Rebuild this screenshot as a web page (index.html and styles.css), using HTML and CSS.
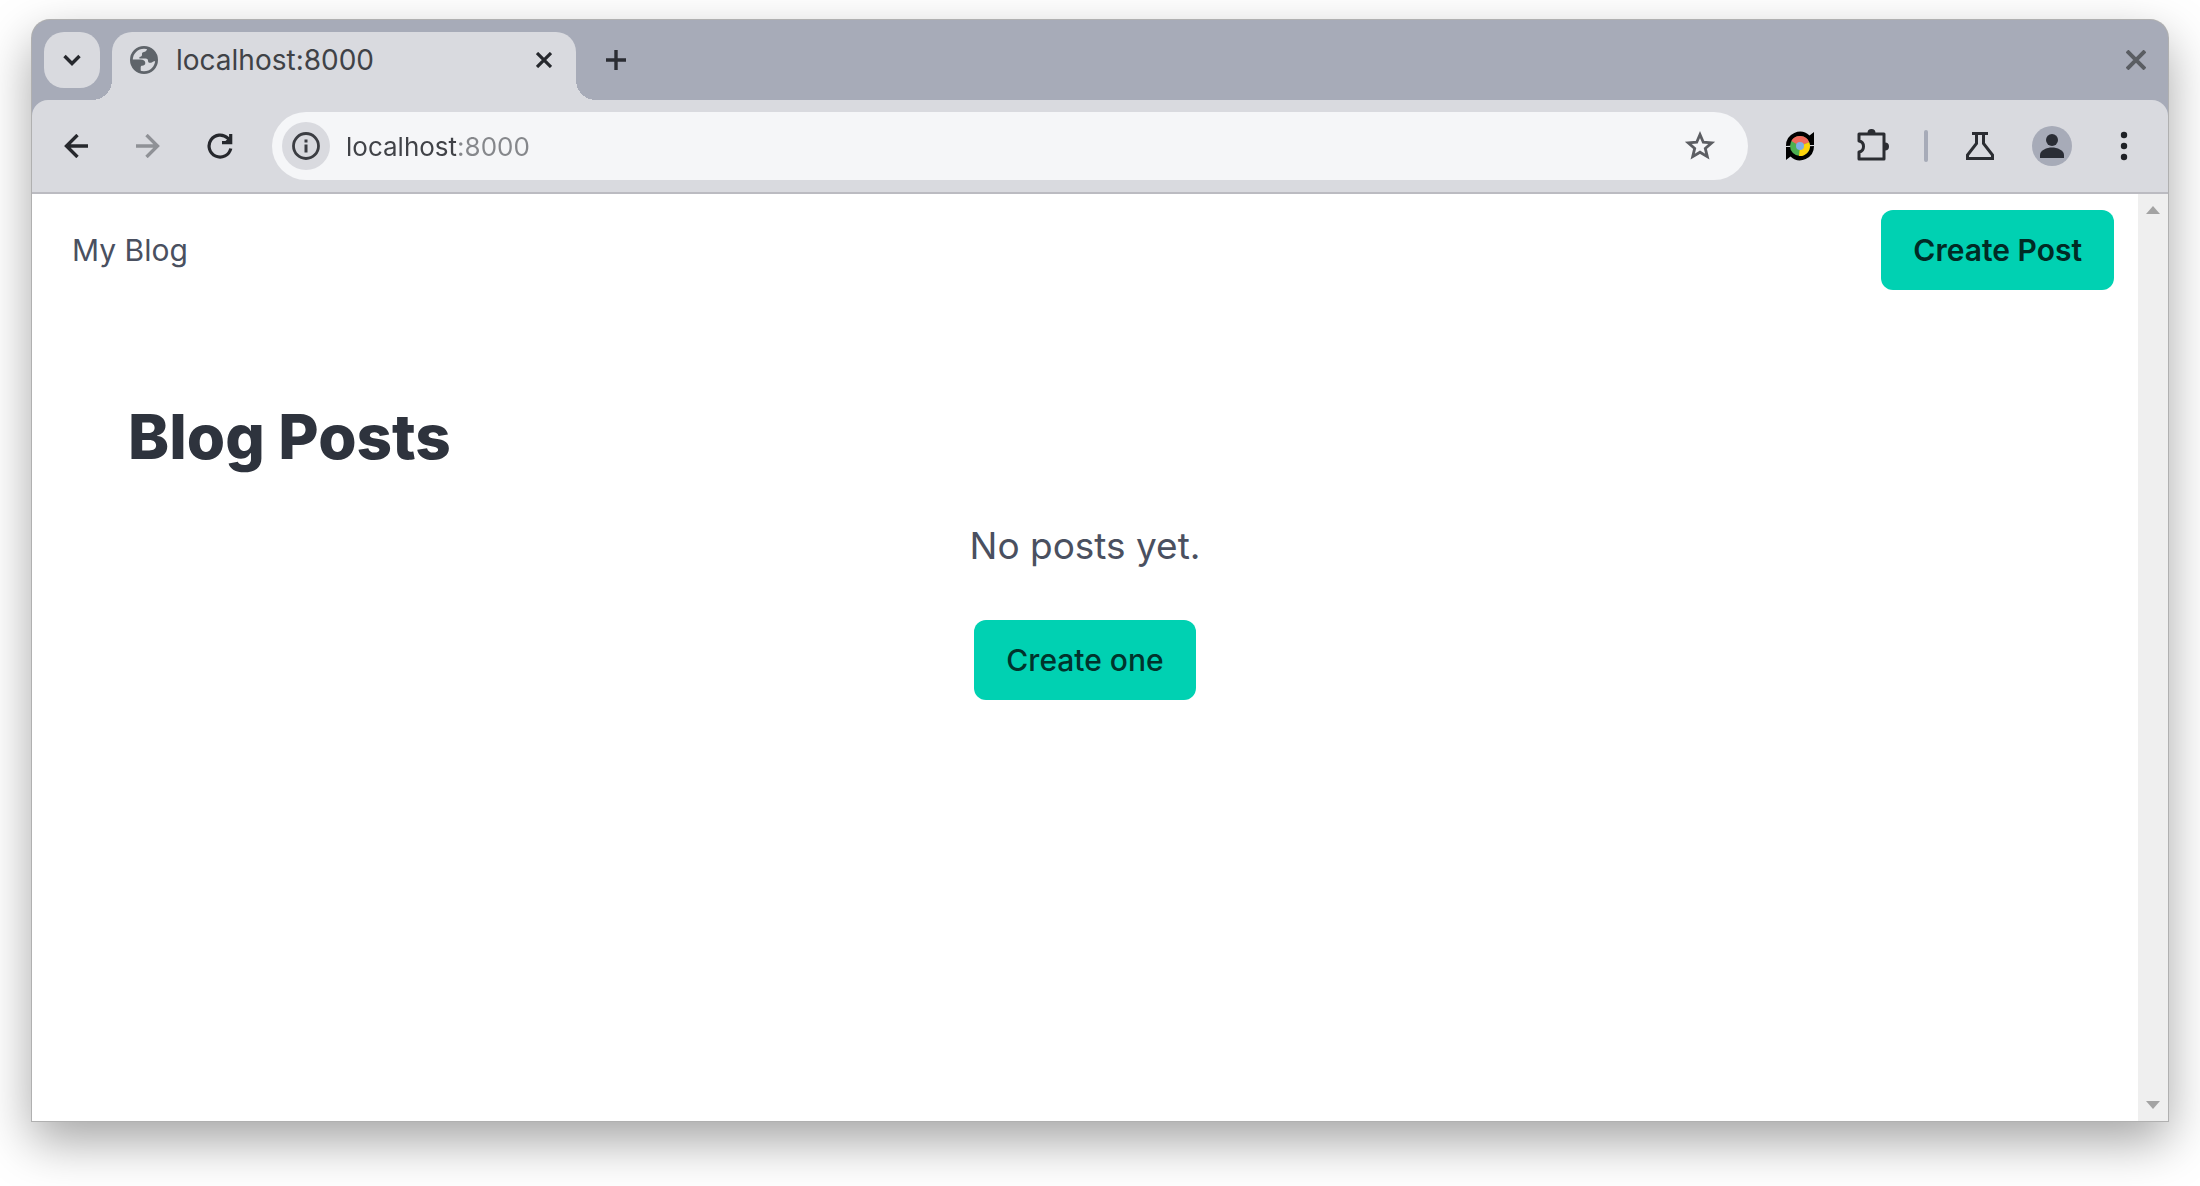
FILE: index.html
```html
<!DOCTYPE html>
<html lang="en">
<head>
    <meta charset="utf-8">
    <title>localhost:8000</title>
    <link rel="stylesheet" href="styles.css">
</head>
<body>
    <div class="window">
        <div class="tab-strip">
            <button class="tab-search" aria-label="Search tabs">
                <svg width="24" height="24" viewBox="0 0 24 24" fill="none" stroke="#26282d" stroke-width="3.4"><path d="M4.500 8 12 15.500 19.500 8"/></svg>
            </button>
            <div class="tab">
                <svg width="28" height="28" viewBox="0 0 28 28">
                    <circle cx="14" cy="14" r="12.600" fill="#d9dadf" stroke="#5f646a" stroke-width="2.800"/>
                    <path d="M17 2c.3 2-.8 3.600-3 4-1.500.3-2.200 1-2 2.400.2 1.500-1 2.300-2.600 2.500v1.600h6c2.300 0 2.600 1.200 2.700 2.700.1 1.200 1 1.800 2.600 1.600 2-.3 2.600-2.300 5.800-1.800A13 13 0 0 0 17 2z" fill="#5f646a"/>
                    <path d="M2 13.500h8.500c3 0 4.800 1.400 4.800 3.500 0 1.800-1.400 2.700-3.300 2.800-.9 0-1.300.6-1.300 1.600V26A13 13 0 0 1 2 13.500z" fill="#5f646a"/>
                </svg>
                <span class="tab-title">localhost:8000</span>
                <button class="tab-close" aria-label="Close tab">
                    <svg width="16" height="16" viewBox="0 0 16 16" fill="none" stroke="#26282d" stroke-width="3.200"><path d="M1 1l14 14M15 1 1 15"/></svg>
                </button>
            </div>
            <button class="new-tab" aria-label="New tab">
                <svg width="20" height="20" viewBox="0 0 20 20" fill="none" stroke="#2b2d33" stroke-width="3.400"><path d="M10 0v20M0 10h20"/></svg>
            </button>
            <button class="window-close" aria-label="Close window">
                <svg width="20" height="20" viewBox="0 0 20 20" fill="none" stroke="#5a5d62" stroke-width="4"><path d="M1 1l18 18M19 1 1 19"/></svg>
            </button>
        </div>

        <div class="toolbar">
            <button class="tool" aria-label="Back">
                <svg width="24" height="24" viewBox="0 0 24 24" fill="none" stroke="#26282d" stroke-width="3.400"><path d="M24 12H2M13.500 1 2.500 12l11 11"/></svg>
            </button>
            <button class="tool" aria-label="Forward" disabled>
                <svg width="24" height="24" viewBox="0 0 24 24" fill="none" stroke="#8f9196" stroke-width="3.400"><path d="M0 12h22M10.500 1l11 11-11 11"/></svg>
            </button>
            <button class="tool" aria-label="Reload">
                <svg width="26" height="26" viewBox="0 0 26 26" fill="none" stroke="#26282d" stroke-width="3.200"><path d="M23.800 15.500A11 11 0 1 1 20.800 5.200L23 7.500"/><path d="M23.700 1v8.700h-8.700"/><path d="M18 8.500 23 3.500v5z" fill="#26282d" stroke="none"/></svg>
            </button>
            <div class="address">
                <button class="site-info" aria-label="View site information">
                    <svg width="28" height="28" viewBox="0 0 28 28" fill="none" stroke="#3b3d42" stroke-width="2.800"><circle cx="14" cy="14" r="12.500"/><path d="M14 12.500v8M14 7.500v3" stroke-width="3"/></svg>
                </button>
                <input class="url" type="text" value="localhost:8000" aria-label="Address" spellcheck="false">
                <button class="bookmark" aria-label="Bookmark this page">
                    <svg width="32" height="32" viewBox="0 0 32 32" fill="none" stroke="#5c5e63" stroke-width="2.800"><path d="M16 4.500l3.300 7.700 8.400.7-6.400 5.500 2 8.200-7.300-4.400-7.300 4.400 2-8.200-6.400-5.500 8.400-.7z"/></svg>
                </button>
            </div>
            <button class="tool" aria-label="Chrome reload extension">
                <svg width="30" height="30" viewBox="0 0 30 30">
                    <path d="M1 15A14 14 0 0 1 24.500 4.500L29 1v13H19zM29 15A14 14 0 0 1 5.500 25.500L1 29V16h10z" fill="#000"/>
                    <circle cx="15" cy="15" r="10" fill="#4caf50"/>
                    <path d="M15 15 6.300 10A10 10 0 0 1 24.200 11.200z" fill="#f0695c"/>
                    <path d="M15 15l9.200-3.800A10 10 0 0 1 14 25z" fill="#fdd30a"/>
                    <circle cx="15" cy="15" r="4" fill="#7faee6"/>
                </svg>
            </button>
            <button class="tool" aria-label="Extensions">
                <svg width="34" height="34" viewBox="0 0 34 34" fill="none" stroke="#2b2d32" stroke-width="3" stroke-linejoin="round"><path d="M4 5h25v25H4v-7c6-1 6-10 0-11z"/><path d="M12.500 4a4 4 0 0 1 8 0zM30 13.500a4 4 0 0 1 0 8z" fill="#2b2d32" stroke="none"/></svg>
            </button>
            <span class="divider"></span>
            <button class="tool" aria-label="Labs">
                <svg width="28" height="28" viewBox="0 0 28 28" fill="none" stroke="#2b2d32" stroke-width="3"><path d="M6 1.500h16M10.500 2v9.500L1.500 23v3.500h25V23l-9-11.500V2"/></svg>
            </button>
            <button class="tool" aria-label="Profile">
                <svg width="40" height="40" viewBox="0 0 40 40"><circle cx="20" cy="20" r="20" fill="#a7abb8"/><circle cx="20" cy="14" r="6" fill="#2a2d35"/><path d="M8 32v-3c0-5 7-7.500 12-7.500S32 24 32 29v3z" fill="#2a2d35"/></svg>
            </button>
            <button class="tool" aria-label="Menu">
                <svg width="8" height="30" viewBox="0 0 8 30" fill="#1f2126"><circle cx="4" cy="4" r="3.200"/><circle cx="4" cy="15" r="3.200"/><circle cx="4" cy="26" r="3.200"/></svg>
            </button>
        </div>

        <div class="viewport">
            <div class="page">
                <nav class="navbar">
                    <a class="brand" href="#">My Blog</a>
                    <a class="button is-strong" href="#">Create Post</a>
                </nav>
                <main class="section">
                    <h1 class="title">Blog Posts</h1>
                    <div class="empty">
                        <p class="empty-text">No posts yet.</p>
                        <a class="button" href="#">Create one</a>
                    </div>
                </main>
            </div>
            <div class="scrollbar">
                <svg width="14" height="8" viewBox="0 0 14 8" fill="#a3a3a3"><path d="M7 0l7 8H0z"/></svg>
                <svg width="14" height="8" viewBox="0 0 14 8" fill="#a3a3a3"><path d="M0 0h14L7 8z"/></svg>
            </div>
        </div>
    </div>
</body>
</html>
```
FILE: styles.css
```css
* {
    box-sizing: border-box;
}
body {
    margin: 0;
    min-height: 100vh;
    display: flex;
    padding: 20px 32px 65px;
    background-color: #fff;
    font-family: Inter, "Liberation Sans", sans-serif;
    overflow: hidden;
}
button {
    display: flex;
    align-items: center;
    justify-content: center;
    flex: none;
    padding: 0;
    border: none;
    background: none;
    cursor: pointer;
}
svg {
    display: block;
    flex: none;
}
a {
    text-decoration: none;
}

/* window frame */
.window {
    flex: 1;
    display: flex;
    flex-direction: column;
    background-color: #a7abb8;
    border-radius: 18px 18px 0 0;
    box-shadow: 0 0 0 1px #b0b0b0, 0 20px 50px rgba(0, 0, 0, 0.36);
}
.tab-strip {
    display: flex;
    align-items: center;
    height: 80px;
    padding: 0 12px;
}
.tab-search {
    width: 56px;
    height: 56px;
    margin-right: 12px;
    border-radius: 20px;
    background-color: #d9dadf;
}
.tab {
    position: relative;
    align-self: flex-end;
    display: flex;
    align-items: center;
    width: 464px;
    height: 68px;
    padding: 0 20px 12px 18px;
    border-radius: 20px 20px 0 0;
    background-color: #d9dadf;
}
/* curved feet of the active tab */
.tab::before,
.tab::after {
    content: "";
    position: absolute;
    bottom: 0;
    width: 20px;
    height: 20px;
}
.tab::before {
    right: 100%;
    background: radial-gradient(circle at 0 0, transparent 20px, #d9dadf 20px);
}
.tab::after {
    left: 100%;
    background: radial-gradient(circle at 100% 0, transparent 20px, #d9dadf 20px);
}
.tab-title {
    flex: 1;
    margin-left: 18px;
    font-size: 28px;
    color: #404247;
}
.tab-close {
    width: 24px;
    height: 24px;
}
.new-tab {
    width: 56px;
    height: 56px;
    margin-left: 12px;
}
.window-close {
    width: 40px;
    height: 40px;
    margin-left: auto;
}

/* toolbar */
.toolbar {
    display: flex;
    align-items: center;
    gap: 16px;
    height: 94px;
    padding: 0 16px;
    border-bottom: 2px solid #bbbbc1;
    border-radius: 16px 16px 0 0;
    background-color: #d9dadf;
}
.tool {
    width: 56px;
    height: 56px;
}
.address {
    flex: 1;
    display: flex;
    align-items: center;
    height: 68px;
    margin: 0 8px;
    padding: 0 32px 0 10px;
    border-radius: 34px;
    background-color: #f5f6f8;
}
.site-info {
    width: 48px;
    height: 48px;
    border-radius: 50%;
    background-color: #d9dadf;
}
.url {
    flex: 1;
    min-width: 0;
    height: 48px;
    margin-left: 16px;
    padding: 0;
    border: none;
    outline: none;
    font-family: inherit;
    font-size: 26px;
    /* host is dark, port is muted */
    background: linear-gradient(to right, #404247 110px, #85878b 110px);
    -webkit-background-clip: text;
    background-clip: text;
    color: transparent;
}
.divider {
    width: 4px;
    height: 32px;
    margin: 0 8px;
    background-color: #a7abb8;
    border-radius: 2px;
}

/* page content */
.viewport {
    flex: 1;
    display: flex;
    background-color: #fff;
}
.page {
    flex: 1;
}
.navbar {
    display: flex;
    align-items: center;
    justify-content: space-between;
    height: 112px;
    padding: 0 24px 0 40px;
}
.brand {
    font-size: 30px;
    color: #4a5060;
}
.button {
    display: inline-flex;
    align-items: center;
    height: 80px;
    padding: 0 32px;
    border-radius: 12px;
    background-color: #00d1b2;
    color: #00332c;
    font-size: 30px;
    font-weight: 500;
}
.is-strong {
    color: #002b25;
    font-weight: 600;
}
.section {
    padding: 96px;
}
.title {
    margin: 0 0 44px;
    font-size: 62px;
    line-height: 70px;
    font-weight: 800;
    color: #2e333d;
}
.empty {
    text-align: center;
}
.empty-text {
    margin: 0 0 44px;
    font-size: 37px;
    line-height: 60px;
    color: #4a5060;
}
.scrollbar {
    display: flex;
    flex-direction: column;
    align-items: center;
    justify-content: space-between;
    width: 30px;
    padding: 12px 0;
    background-color: #efefef;
}
```
